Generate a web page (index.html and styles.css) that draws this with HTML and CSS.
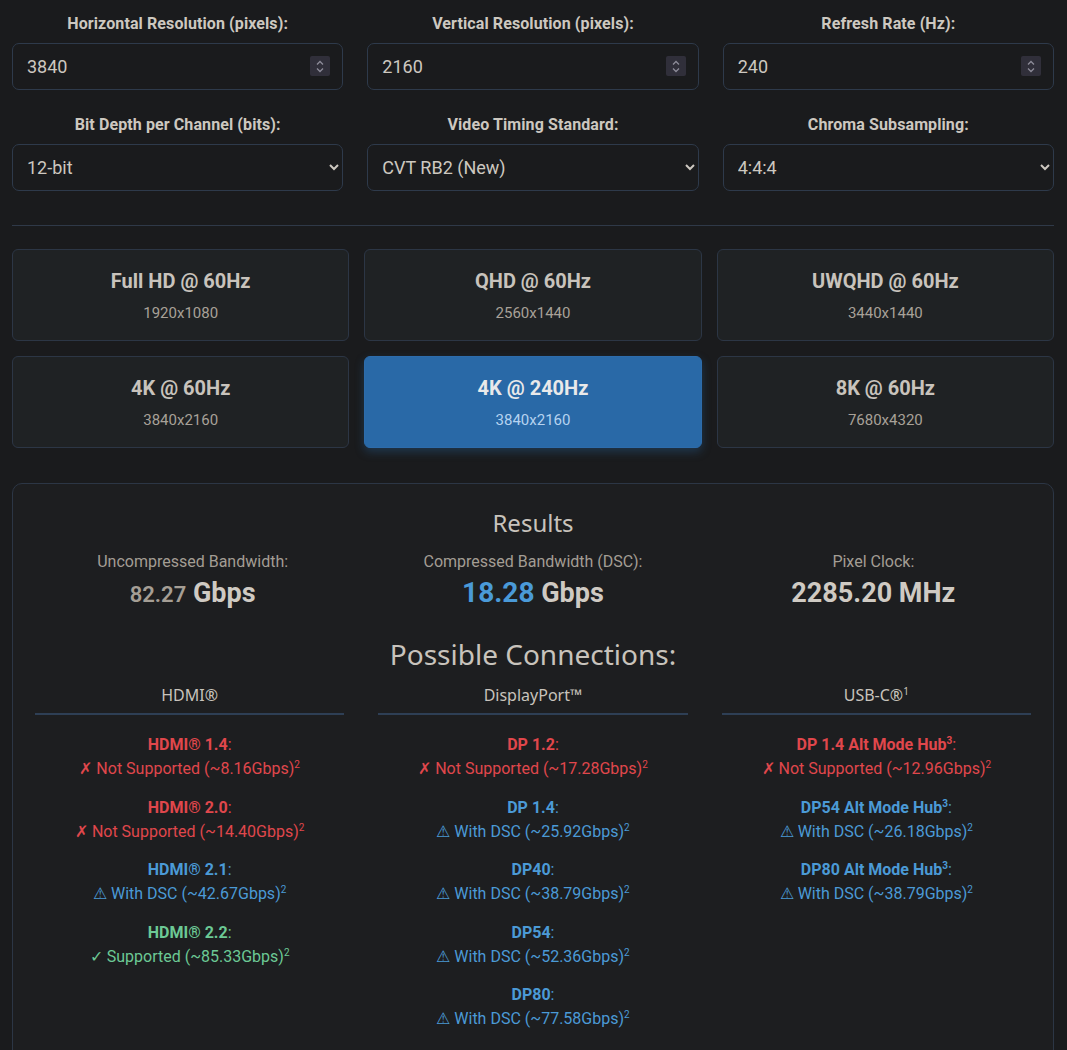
FILE: index.html
```html
<!DOCTYPE html>
<html lang="en">
<head>
<meta charset="utf-8">
<title>Display Bandwidth Calculator</title>
<link rel="stylesheet" href="styles.css">
</head>
<body>
<div class="page">
  <div class="form-grid">
    <div class="field">
      <label class="field-label">Horizontal Resolution (pixels):</label>
      <div class="num-wrap">
        <input class="control" type="number" value="3840">
        <span class="spinner"><svg width="20" height="19" viewBox="0 0 20 19"><path d="M7 7.5 L10 4.5 L13 7.5 M7 11.5 L10 14.5 L13 11.5" fill="none" stroke="#8d8c99" stroke-width="1.3"/></svg></span>
      </div>
    </div>
    <div class="field">
      <label class="field-label">Vertical Resolution (pixels):</label>
      <div class="num-wrap">
        <input class="control" type="number" value="2160">
        <span class="spinner"><svg width="20" height="19" viewBox="0 0 20 19"><path d="M7 7.5 L10 4.5 L13 7.5 M7 11.5 L10 14.5 L13 11.5" fill="none" stroke="#8d8c99" stroke-width="1.3"/></svg></span>
      </div>
    </div>
    <div class="field">
      <label class="field-label">Refresh Rate (Hz):</label>
      <div class="num-wrap">
        <input class="control" type="number" value="240">
        <span class="spinner"><svg width="20" height="19" viewBox="0 0 20 19"><path d="M7 7.5 L10 4.5 L13 7.5 M7 11.5 L10 14.5 L13 11.5" fill="none" stroke="#8d8c99" stroke-width="1.3"/></svg></span>
      </div>
    </div>
    <div class="field">
      <label class="field-label">Bit Depth per Channel (bits):</label>
      <select class="control"><option>12-bit</option></select>
    </div>
    <div class="field">
      <label class="field-label">Video Timing Standard:</label>
      <select class="control"><option>CVT RB2 (New)</option></select>
    </div>
    <div class="field">
      <label class="field-label">Chroma Subsampling:</label>
      <select class="control"><option>4:4:4</option></select>
    </div>
  </div>

  <hr class="divider">

  <div class="presets">
    <div class="preset"><div class="preset-title">Full HD @ 60Hz</div><div class="preset-sub">1920x1080</div></div>
    <div class="preset"><div class="preset-title">QHD @ 60Hz</div><div class="preset-sub">2560x1440</div></div>
    <div class="preset"><div class="preset-title">UWQHD @ 60Hz</div><div class="preset-sub">3440x1440</div></div>
    <div class="preset"><div class="preset-title">4K @ 60Hz</div><div class="preset-sub">3840x2160</div></div>
    <div class="preset active"><div class="preset-title">4K @ 240Hz</div><div class="preset-sub">3840x2160</div></div>
    <div class="preset"><div class="preset-title">8K @ 60Hz</div><div class="preset-sub">7680x4320</div></div>
  </div>

  <div class="results">
    <h2 class="results-title">Results</h2>
    <div class="stats">
      <div class="stat">
        <div class="stat-label">Uncompressed Bandwidth:</div>
        <div class="stat-value"><span class="num-muted">82.27</span> Gbps</div>
      </div>
      <div class="stat">
        <div class="stat-label">Compressed Bandwidth (DSC):</div>
        <div class="stat-value"><span class="num-blue">18.28</span> Gbps</div>
      </div>
      <div class="stat">
        <div class="stat-label">Pixel Clock:</div>
        <div class="stat-value">2285.20 MHz</div>
      </div>
    </div>

    <h2 class="conn-title">Possible Connections:</h2>
    <div class="conn-grid">
      <div class="conn-col">
        <h3 class="conn-head">HDMI®</h3>
        <div class="conn-item bad"><div class="conn-name">HDMI® 1.4<span class="colon">:</span></div><div class="conn-status">✗ Not Supported (~8.16Gbps)<sup>2</sup></div></div>
        <div class="conn-item bad"><div class="conn-name">HDMI® 2.0<span class="colon">:</span></div><div class="conn-status">✗ Not Supported (~14.40Gbps)<sup>2</sup></div></div>
        <div class="conn-item dsc"><div class="conn-name">HDMI® 2.1<span class="colon">:</span></div><div class="conn-status">⚠ With DSC (~42.67Gbps)<sup>2</sup></div></div>
        <div class="conn-item ok"><div class="conn-name">HDMI® 2.2<span class="colon">:</span></div><div class="conn-status">✓ Supported (~85.33Gbps)<sup>2</sup></div></div>
      </div>
      <div class="conn-col">
        <h3 class="conn-head">DisplayPort™</h3>
        <div class="conn-item bad"><div class="conn-name">DP 1.2<span class="colon">:</span></div><div class="conn-status">✗ Not Supported (~17.28Gbps)<sup>2</sup></div></div>
        <div class="conn-item dsc"><div class="conn-name">DP 1.4<span class="colon">:</span></div><div class="conn-status">⚠ With DSC (~25.92Gbps)<sup>2</sup></div></div>
        <div class="conn-item dsc"><div class="conn-name">DP40<span class="colon">:</span></div><div class="conn-status">⚠ With DSC (~38.79Gbps)<sup>2</sup></div></div>
        <div class="conn-item dsc"><div class="conn-name">DP54<span class="colon">:</span></div><div class="conn-status">⚠ With DSC (~52.36Gbps)<sup>2</sup></div></div>
        <div class="conn-item dsc"><div class="conn-name">DP80<span class="colon">:</span></div><div class="conn-status">⚠ With DSC (~77.58Gbps)<sup>2</sup></div></div>
      </div>
      <div class="conn-col">
        <h3 class="conn-head">USB-C®<sup>1</sup></h3>
        <div class="conn-item bad"><div class="conn-name">DP 1.4 Alt Mode Hub<sup>3</sup><span class="colon">:</span></div><div class="conn-status">✗ Not Supported (~12.96Gbps)<sup>2</sup></div></div>
        <div class="conn-item dsc"><div class="conn-name">DP54 Alt Mode Hub<sup>3</sup><span class="colon">:</span></div><div class="conn-status">⚠ With DSC (~26.18Gbps)<sup>2</sup></div></div>
        <div class="conn-item dsc"><div class="conn-name">DP80 Alt Mode Hub<sup>3</sup><span class="colon">:</span></div><div class="conn-status">⚠ With DSC (~38.79Gbps)<sup>2</sup></div></div>
      </div>
    </div>
  </div>
</div>
</body>
</html>
```

FILE: styles.css
```css
html, body {
  margin: 0;
  padding: 0;
  background: #1a1b1d;
  color: #cdc8c0;
  font-family: Roboto, "Liberation Sans", sans-serif;
}

.page {
  padding: 12px 13px 40px 12px;
}

.form-grid {
  display: grid;
  grid-template-columns: repeat(3, 1fr);
  column-gap: 24px;
  row-gap: 23px;
}

.field {
  display: flex;
  flex-direction: column;
}

.field-label {
  font-size: 16px;
  font-weight: 700;
  text-align: center;
  line-height: 24px;
  margin-bottom: 7px;
  color: #cdc8c0;
  letter-spacing: 0.1px;
}

.num-wrap {
  position: relative;
}

.control {
  color-scheme: dark;
  box-sizing: border-box;
  height: 47px;
  width: 100%;
  padding: 0 14px;
  font-family: Roboto, "Liberation Sans", sans-serif;
  font-size: 18px;
  color: #cdc8c0;
  background-color: #1a1b1d;
  border: 1px solid #2e3a4b;
  border-radius: 7px;
  outline: none;
}

input.control::-webkit-inner-spin-button,
input.control::-webkit-outer-spin-button {
  -webkit-appearance: none;
  margin: 0;
}

.spinner {
  position: absolute;
  right: 13px;
  top: 13px;
  width: 20px;
  height: 20px;
  background: #302f3a;
  border-radius: 2px;
  display: flex;
  align-items: center;
}

select.control {
  padding: 0 10px;
}

.divider {
  border: 0;
  height: 1px;
  background: #2f3948;
  margin: 34px 0 23px;
}

.presets {
  display: grid;
  grid-template-columns: repeat(3, 1fr);
  gap: 15px;
}

.preset {
  box-sizing: border-box;
  height: 92px;
  background: #1f2224;
  border: 1px solid #2c3645;
  border-radius: 6px;
  text-align: center;
  padding-top: 18px;
}

.preset-title {
  font-size: 20px;
  font-weight: 700;
  line-height: 26px;
  color: #c8c3bc;
}

.preset-sub {
  margin-top: 10px;
  font-size: 15px;
  line-height: 18px;
  color: #a8a198;
}

.preset.active {
  background: #2969a7;
  border-color: #2d6cab;
  box-shadow: 0 4px 10px rgba(41, 105, 167, 0.35);
}

.preset.active .preset-title {
  color: #e9e9ea;
}

.preset.active .preset-sub {
  color: #b6d3f0;
}

.results {
  margin-top: 35px;
  background: #1d1e20;
  border: 1px solid #2c3645;
  border-radius: 10px;
  padding: 23px 22px 30px;
}

.results-title {
  font-family: "Noto Sans", "Open Sans", sans-serif;
  font-weight: 400;
  font-size: 24px;
  line-height: 32px;
  text-align: center;
  margin: 0;
  color: #c8c3bc;
}

.stats {
  display: grid;
  grid-template-columns: repeat(3, 1fr);
  column-gap: 25px;
  margin-top: 12px;
}

.stat {
  text-align: center;
}

.stat-label {
  font-size: 16px;
  line-height: 22px;
  color: #a39d94;
}

.stat-value {
  margin-top: 4px;
  font-size: 27px;
  font-weight: 700;
  line-height: 32px;
  color: #cfcac3;
}

.num-muted {
  color: #a59e95;
  font-size: 22px;
  font-weight: 600;
}

.num-blue {
  color: #4a9ad8;
  font-size: 28px;
}

.conn-title {
  font-family: "Noto Sans", "Open Sans", sans-serif;
  font-weight: 400;
  font-size: 28px;
  line-height: 38px;
  text-align: center;
  margin: 24px 0 0;
  color: #c8c3bc;
}

.conn-grid {
  display: grid;
  grid-template-columns: repeat(3, 1fr);
  column-gap: 34px;
  margin-top: 10px;
}

.conn-col {
  text-align: center;
}

.conn-head {
  font-family: "Noto Sans", "Open Sans", sans-serif;
  font-weight: 400;
  font-size: 16px;
  line-height: 24px;
  margin: 0;
  padding-bottom: 6px;
  border-bottom: 2px solid #2e3f55;
  color: #c8c3bc;
}

.conn-head sup {
  font-size: 10px;
  line-height: 0;
}

.conn-item {
  margin-top: 14.5px;
  font-size: 16px;
  line-height: 24px;
}

.conn-col .conn-head + .conn-item {
  margin-top: 18px;
}

.conn-name {
  font-weight: 700;
}

.conn-name .colon {
  font-weight: 400;
}

.conn-item sup {
  font-size: 10px;
  line-height: 0;
}

.bad { color: #e0474c; }
.dsc { color: #4b9ad6; }
.ok { color: #6cc995; }
```
